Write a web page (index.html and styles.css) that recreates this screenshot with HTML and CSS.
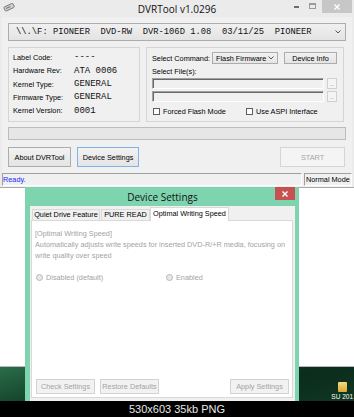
FILE: index.html
```html
<!DOCTYPE html>
<html>
<head>
<meta charset="utf-8">
<title>DVRTool v1.0296</title>
<link rel="stylesheet" href="styles.css">
</head>
<body>
<div id="screen">
  <div class="backdrop"></div>
  <div class="wallpaper">
    <div class="folder"></div>
    <span class="folder_label">SU 201</span>
  </div>

  <div id="main_window">
    <div class="titlebar">
      <svg class="app_icon" width="12" height="10" viewBox="0 0 12 10">
        <g transform="rotate(-25 6 5)">
          <rect x="1" y="3" width="10" height="4.5" rx="1" fill="#cfcfcf" stroke="#6e6e6e" stroke-width="0.8"/>
          <rect x="2.5" y="4.6" width="5" height="1" fill="#7a7a7a"/>
        </g>
      </svg>
      <span class="title">DVRTool v1.0296</span>
      <div class="controls">
        <span class="min"></span>
        <span class="max"></span>
        <span class="close">
          <svg width="6" height="6" viewBox="0 0 6 6"><path d="M0.5 0.5 L5.5 5.5 M5.5 0.5 L0.5 5.5" stroke="#fff" stroke-width="1.3"/></svg>
        </span>
      </div>
    </div>

    <div class="client">
      <div class="drive_combo">
        <span class="drive_text">\\.\F: PIONEER  DVD-RW  DVR-106D 1.08  03/11/25  PIONEER</span>
        <svg width="6" height="4" viewBox="0 0 6 4"><path d="M0.5 0.5 L3 3 L5.5 0.5" fill="none" stroke="#555" stroke-width="1"/></svg>
      </div>

      <div class="groups">
        <div class="group info">
          <span>Label Code:</span><span class="val">----</span>
          <span>Hardware Rev:</span><span class="val">ATA 0006</span>
          <span>Kernel Type:</span><span class="val">GENERAL</span>
          <span>Firmware Type:</span><span class="val">GENERAL</span>
          <span>Kernel Version:</span><span class="val">0001</span>
        </div>
        <div class="group cmd">
          <div class="cmd_row">
            <span class="cmd_label">Select Command:</span>
            <div class="select">
              <span>Flash Firmware</span>
              <svg width="6" height="4" viewBox="0 0 6 4"><path d="M0.5 0.5 L3 3 L5.5 0.5" fill="none" stroke="#555" stroke-width="1"/></svg>
            </div>
            <button class="btn info_btn">Device Info</button>
          </div>
          <div class="files_label">Select File(s):</div>
          <div class="file_row">
            <div class="file_box"></div>
            <span class="dots">...</span>
          </div>
          <div class="file_row second">
            <div class="file_box"></div>
            <span class="dots">...</span>
          </div>
          <div class="check_row">
            <label class="check first"><span class="box"></span>Forced Flash Mode</label>
            <label class="check"><span class="box"></span>Use ASPI Interface</label>
          </div>
        </div>
      </div>

      <div class="progress"></div>

      <div class="actions">
        <button class="btn about">About DVRTool</button>
        <button class="btn focused">Device Settings</button>
        <button class="btn start">START</button>
      </div>

      <div class="statusbar">
        <span class="panel ready">Ready.</span>
        <span class="panel mode">Normal Mode</span>
      </div>
    </div>
  </div>

  <div id="settings_dialog">
    <div class="dlg_title">
      <span>Device Settings</span>
      <span class="dlg_close">
        <svg width="6" height="6" viewBox="0 0 6 6"><path d="M0.5 0.5 L5.5 5.5 M5.5 0.5 L0.5 5.5" stroke="#fff" stroke-width="1.4"/></svg>
      </span>
    </div>
    <div class="dlg_client">
      <div class="tabs">
        <span class="tab t1">Quiet Drive Feature</span>
        <span class="tab t2">PURE READ</span>
        <span class="tab t3 selected">Optimal Writing Speed</span>
      </div>
      <div class="tab_page">
        <div class="desc">[Optimal Writing Speed]</div>
        <div class="desc">Automatically adjusts write speeds for inserted DVD-R/+R media, focusing on</div>
        <div class="desc">write quality over speed</div>
        <div class="radio_row">
          <label class="radio first"><span class="dot"></span>Disabled (default)</label>
          <label class="radio"><span class="dot"></span>Enabled</label>
        </div>
        <div class="dlg_buttons">
          <button class="dbtn">Check Settings</button>
          <button class="dbtn">Restore Defaults</button>
          <button class="dbtn apply">Apply Settings</button>
        </div>
      </div>
    </div>
  </div>
</div>
<div class="caption">530x603 35kb PNG</div>
</body>
</html>
```

FILE: styles.css
```css
*
{
  box-sizing:border-box;
}
body
{
  margin:0;
  width:354px;
  height:417px;
  overflow:hidden;
  background-color:#000;
  font-family:"Liberation Sans", Arial, sans-serif;
  font-size:7.3px;
  color:#000;
}
#screen
{
  position:relative;
  height:401px;
  overflow:hidden;
}
.backdrop
{
  height:366px;
  background-color:#fff;
}
.wallpaper
{
  height:35px;
  border-top:1px solid #b9b9b9;
  background:linear-gradient(165deg, #2a6d49 0%, #123f28 35%, #0b2d1b 70%, #103623 100%);
  display:flex;
  flex-direction:column;
  align-items:flex-end;
  padding:15px 0 0 0;
}
.folder
{
  width:9px;
  height:10px;
  margin-right:7px;
  border-radius:1px;
  background:linear-gradient(#f5dc7c, #d8a935);
}
.folder_label
{
  margin-right:1px;
  margin-top:1px;
  color:#fff;
  font-size:6.5px;
  line-height:7px;
  white-space:nowrap;
}

/* main window */
#main_window
{
  position:absolute;
  left:0;
  top:0;
  width:354px;
  height:188px;
  padding:0 2px;
  background-color:#ebebeb;
  border-bottom:1px solid #a9a9a9;
}
.titlebar
{
  height:17px;
  display:grid;
  grid-template-columns:1fr auto 1fr;
  align-items:start;
}
.app_icon
{
  margin:2px 0 0 1px;
}
.title
{
  margin-top:3px;
  font-family:"Open Sans", sans-serif;
  font-size:10px;
  line-height:12px;
  color:#111;
}
.controls
{
  justify-self:end;
  display:flex;
  align-items:flex-start;
}
.min
{
  width:5px;
  height:2px;
  margin-top:6px;
  background-color:#6d6d6d;
}
.max
{
  width:7px;
  height:6px;
  margin:3px 0 0 10px;
  border:1px solid #9a9a9a;
  border-top-width:2px;
}
.close
{
  width:30px;
  height:13px;
  margin-left:6px;
  background-color:#c7c7c7;
  display:flex;
  align-items:center;
  justify-content:center;
}

.client
{
  background-color:#f0f0f0;
  padding:6px 6px 0 6px;
  height:170px;
}
.drive_combo
{
  height:18px;
  display:flex;
  align-items:center;
  justify-content:space-between;
  padding:0 4px 0 7px;
  border:1px solid #acacac;
  background:linear-gradient(#f0f0f0, #e3e3e3);
}
.drive_text
{
  font-family:"Liberation Mono", monospace;
  font-size:8.8px;
  white-space:pre;
  color:#111;
}

.groups
{
  display:flex;
  gap:6px;
  margin-top:6px;
  height:75px;
}
.group
{
  border:1px solid #d5d5d5;
}
.info
{
  width:132px;
  display:grid;
  grid-template-columns:61px auto;
  grid-auto-rows:13.4px;
  align-items:center;
  align-content:start;
  padding:2.6px 0 0 4px;
}
.val
{
  font-family:"Liberation Mono", monospace;
  font-size:9px;
  color:#111;
}
.cmd
{
  width:198px;
  padding:4px 0 0 5px;
}
.cmd_row
{
  display:flex;
  align-items:center;
  height:12px;
}
.cmd_label
{
  width:60px;
}
.select
{
  width:66px;
  height:12px;
  display:flex;
  align-items:center;
  justify-content:space-between;
  padding:0 3px 0 3px;
  border:1px solid #acacac;
  background:linear-gradient(#f2f2f2, #e5e5e5);
}
.btn
{
  font-family:inherit;
  font-size:7.3px;
  color:#000;
  padding:0;
  border:1px solid #acacac;
  background:linear-gradient(#f2f2f2, #e4e4e4);
}
.info_btn
{
  width:53px;
  height:12px;
  margin-left:6px;
}
.files_label
{
  height:12px;
  line-height:12px;
  margin-top:2px;
}
.file_row
{
  display:flex;
  height:11px;
}
.file_row.second
{
  margin-top:2px;
}
.file_box
{
  width:172px;
  border:1px solid;
  border-color:#a0a0a0 #fff #fff #a0a0a0;
  box-shadow:inset 1px 1px #696969;
  background-color:#f0f0f0;
}
.dots
{
  width:10px;
  margin-left:3px;
  display:flex;
  align-items:flex-end;
  justify-content:center;
  font-size:6px;
  line-height:7px;
  letter-spacing:-0.5px;
  color:#8a8a8a;
  border:1px solid #d0d0d0;
  background-color:#f4f4f4;
}
.check_row
{
  display:flex;
  align-items:center;
  height:12px;
  margin-top:3px;
}
.check
{
  display:flex;
  align-items:center;
}
.check.first
{
  width:93px;
  margin-left:1px;
}
.box
{
  width:7px;
  height:7px;
  margin-right:3px;
  border:1px solid #5f5f5f;
  background-color:#fff;
}

.progress
{
  margin-top:5px;
  height:13px;
  border:1px solid #bcbcbc;
  background-color:#e6e6e6;
}
.actions
{
  display:flex;
  gap:6px;
  margin-top:7px;
  height:20px;
}
.about
{
  width:63px;
}
.focused
{
  width:62px;
  border-color:#7eb4ea;
}
.start
{
  width:65px;
  margin-left:auto;
  margin-right:1px;
  color:#a6a6a6;
  border-color:#d5d5d5;
  background:#f4f4f4;
}
.statusbar
{
  display:flex;
  gap:2px;
  margin:6px -6px 0 -6px;
  height:13px;
}
.panel
{
  border:1px solid;
  border-color:#a0a0a0 #fff #fff #a0a0a0;
  line-height:11px;
  white-space:nowrap;
}
.ready
{
  width:300px;
  color:#2424ff;
}
.mode
{
  width:48px;
  padding-left:1px;
}

/* device settings dialog */
#settings_dialog
{
  position:absolute;
  left:25px;
  top:187px;
  width:274px;
  height:220px;
  padding:0 4px 0 5px;
  background-color:#7fd4b0;
  display:flex;
  flex-direction:column;
}
.dlg_title
{
  position:relative;
  height:19px;
  display:flex;
  align-items:center;
  justify-content:center;
  font-family:"Open Sans", sans-serif;
  font-size:10px;
  color:#111;
}
.dlg_close
{
  position:absolute;
  right:0;
  top:0;
  width:20px;
  height:13px;
  background-color:#c75050;
  display:flex;
  align-items:center;
  justify-content:center;
}
.dlg_client
{
  flex:1;
  background-color:#f0f0f0;
  padding:0 2px 0 1px;
}
.tabs
{
  display:flex;
  align-items:flex-end;
  height:14px;
  padding-left:1px;
}
.tab
{
  height:11px;
  line-height:10px;
  text-align:center;
  white-space:nowrap;
  border:1px solid #d9d9d9;
  border-bottom:none;
  background-color:#f0f0f0;
}
.t1
{
  width:68px;
}
.t2
{
  width:49px;
  margin-left:1px;
}
.t3
{
  width:79px;
}
.tab.selected
{
  position:relative;
  height:14px;
  line-height:12px;
  margin-bottom:-1px;
  background-color:#fff;
}
.tab_page
{
  height:178px;
  border:1px solid #d9d9d9;
  background-color:#fff;
  padding:7px 3px 3px 3px;
  display:flex;
  flex-direction:column;
  color:#a3a3a3;
}
.desc
{
  line-height:11px;
  white-space:nowrap;
}
.radio_row
{
  display:flex;
  align-items:center;
  height:11px;
  margin-top:11px;
}
.radio
{
  display:flex;
  align-items:center;
}
.radio.first
{
  width:130px;
  margin-left:1px;
}
.dot
{
  width:7px;
  height:7px;
  margin-right:3px;
  border:1px solid #b8b8b8;
  border-radius:50%;
  background-color:#e8e8e8;
}
.dlg_buttons
{
  display:flex;
  gap:5px;
  margin-top:auto;
  padding-left:1px;
}
.dbtn
{
  width:59px;
  height:15px;
  padding:0;
  font-family:inherit;
  font-size:7.3px;
  color:#a3a3a3;
  border:1px solid #d3d3d3;
  background-color:#f2f2f2;
}
.dbtn.apply
{
  margin-left:auto;
}

.caption
{
  height:16px;
  line-height:16px;
  text-align:center;
  color:#e8e8e8;
  font-family:"Liberation Sans", Arial, sans-serif;
  font-size:11px;
}
```
